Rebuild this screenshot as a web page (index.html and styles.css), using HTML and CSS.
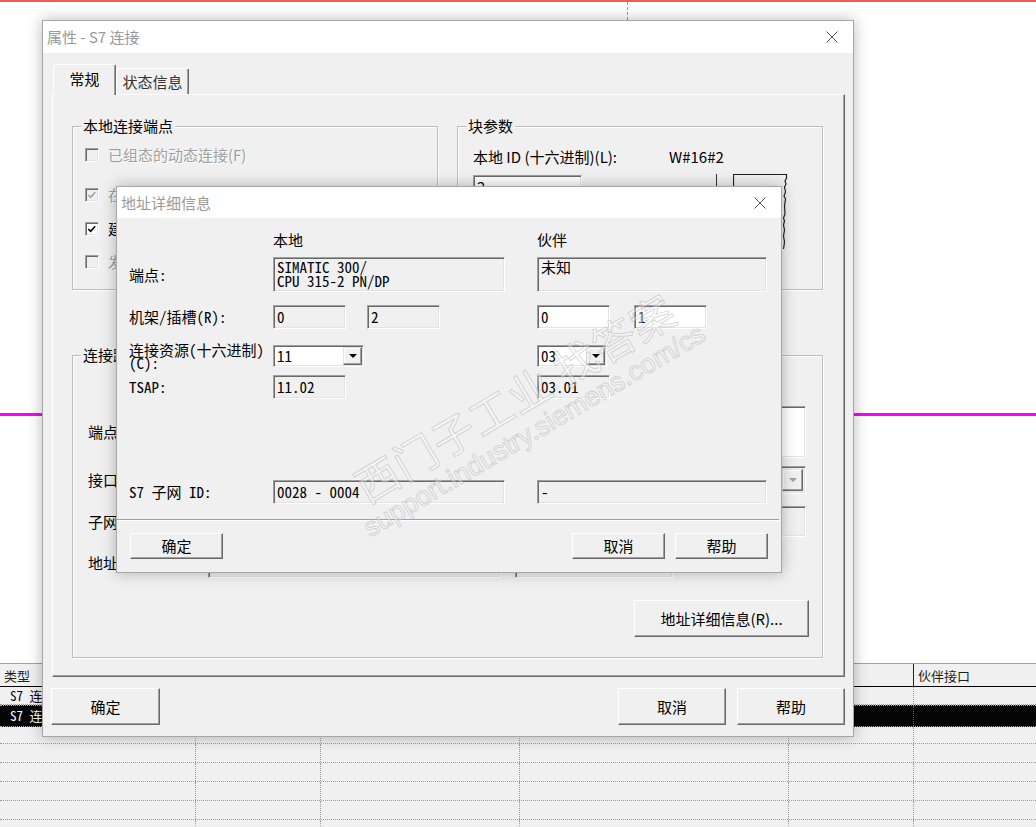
FILE: index.html
```html
<!DOCTYPE html>
<html lang="zh-CN">
<head>
<meta charset="utf-8">
<title>属性 - S7 连接</title>
<link rel="stylesheet" href="styles.css">
</head>
<body>
<div class="desktop">
  <div class="canvas">
    <div class="dash-v"></div>
    <div class="magenta"></div>
  </div>
  <div class="list">
    <div class="lrow lhead"><div>类型</div><div>活动连接建立</div><div>发送操作模式消息</div><div>本地接口</div><div>子网</div><div>伙伴接口</div></div>
    <div class="lrow r1"><div>S7 连接</div><div></div><div></div><div></div><div></div><div></div></div>
    <div class="lrow sel"><div>S7 连接</div><div></div><div></div><div></div><div></div><div></div></div>
    <div class="lrow r3"><div></div><div></div><div></div><div></div><div></div><div></div></div>
    <div class="lrow"><div></div><div></div><div></div><div></div><div></div><div></div></div>
    <div class="lrow"><div></div><div></div><div></div><div></div><div></div><div></div></div>
    <div class="lrow"><div></div><div></div><div></div><div></div><div></div><div></div></div>
    <div class="lrow"><div></div><div></div><div></div><div></div><div></div><div></div></div>
    <div class="lrow"><div></div><div></div><div></div><div></div><div></div><div></div></div>
  </div>
</div>

<div class="win outer">
  <div class="titlebar"><span class="title">属性 - S7 连接</span><svg class="x" width="12" height="12" viewBox="0 0 12 12"><path d="M0.5 0.5L11.5 11.5M11.5 0.5L0.5 11.5" stroke="#555" stroke-width="1" fill="none"/></svg></div>
  <div class="ob">
    <div class="tabs"><div class="tab active">常规</div><div class="tab">状态信息</div></div>
    <div class="panel">
      <div class="groups">
        <div class="group g-local">
          <span class="legend">本地连接端点</span>
          <div class="chk dis c1"><span class="cb"></span><span>已组态的动态连接(F)</span></div>
          <div class="chk dis c2"><span class="cb"><svg viewBox="0 0 13 13"><path d="M2.5 6.5l2.5 2.5 5-5.5" stroke="#a0a0a0" stroke-width="1.8" fill="none"/></svg></span><span>在一端(O)</span></div>
          <div class="chk c3"><span class="cb on"><svg viewBox="0 0 13 13"><path d="M2.5 6.5l2.5 2.5 5-5.5" stroke="#000" stroke-width="1.8" fill="none"/></svg></span><span>建立激活的连接(A)</span></div>
          <div class="chk dis c4"><span class="cb"></span><span>发送工作模式消息(S)</span></div>
        </div>
        <div class="group g-block">
          <span class="legend">块参数</span>
          <div class="brow"><span class="blbl">本地 ID (十六进制)(L):</span><span>W#16#2</span></div>
          <div class="brow2">
            <div class="fld w bid">2</div>
            <div class="vline"></div>
            <svg class="blk" width="56" height="75" viewBox="0 0 56 75"><path d="M0.5 75V0.5H53.5V4L52 7L53 10L51.5 13L52.5 18L51 22L52.5 25L51.5 32L52 40L50.5 44L51.5 47L50.5 51L51.5 56L50.5 62L51.5 68L50.5 75" stroke="#222" stroke-width="1.2" fill="#f0f0f0"/></svg>
          </div>
        </div>
        <div class="group g-path">
          <span class="legend">连接路径</span>
          <div class="prow phdr"><span></span><span>本地</span><span>伙伴</span></div>
          <div class="prow p-ep"><span>端点:</span><div class="fld"></div><div class="fld w"></div></div>
          <div class="prow p-if"><span>接口:</span><div class="fld dd"><span class="drop dis"><i></i></span></div><div class="fld dd"><span class="drop dis"><i></i></span></div></div>
          <div class="prow p-sub"><span>子网:</span><div class="fld"></div><div class="fld"></div></div>
          <div class="prow p-addr"><span>地址:</span><div class="fld"></div><div class="fld short"></div></div>
          <div class="pbtn"><div class="btn big">地址详细信息(R)...</div></div>
        </div>
      </div>
    </div>
    <div class="obtns"><div class="btn ok">确定</div><span class="grow"></span><div class="btn cn">取消</div><div class="btn cn">帮助</div></div>
  </div>
</div>

<div class="win inner">
  <div class="titlebar"><span class="title">地址详细信息</span><svg class="x" width="12" height="12" viewBox="0 0 12 12"><path d="M0.5 0.5L11.5 11.5M11.5 0.5L0.5 11.5" stroke="#555" stroke-width="1" fill="none"/></svg></div>
  <div class="ib">
    <div class="irow hdr"><span></span><span>本地</span><span>伙伴</span></div>
    <div class="irow r-ep"><span>端点:</span><div class="fld ml">SIMATIC 300/<br>CPU 315-2 PN/DP</div><div class="fld ml">未知</div></div>
    <div class="irow r-rack"><span>机架/插槽(R):</span><div class="pair"><div class="fld s">0</div><div class="fld s">2</div></div><div class="pair p2"><div class="fld s w">0</div><div class="fld s w">1</div></div></div>
    <div class="irow r-res"><span class="two">连接资源(十六进制)<br>(C):</span><div><div class="fld w combo cl"><span>11</span><span class="drop"><i></i></span></div></div><div><div class="fld w combo cp"><span>03</span><span class="drop"><i></i></span></div></div></div>
    <div class="irow r-tsap"><span>TSAP:</span><div><div class="fld s">11.02</div></div><div><div class="fld s">03.01</div></div></div>
    <div class="irow r-sub"><span>S7 子网 ID:</span><div class="fld">0028 - 0004</div><div class="fld">-</div></div>
    <div class="sep"></div>
    <div class="ibtns"><div class="btn">确定</div><span class="grow"></span><div class="btn">取消</div><div class="btn">帮助</div></div>
    <div class="wm"><div class="wm1">西门子工业 找答案</div><div class="wm2">support.industry.siemens.com/cs</div></div>
  </div>
</div>
</body>
</html>
```

FILE: styles.css
```css
* { box-sizing: border-box; }
html, body { margin: 0; }
body {
  width: 1036px; height: 827px; overflow: hidden; position: relative;
  background: #fff; color: #000;
  font-family: "Noto Sans CJK SC", "Liberation Sans", sans-serif;
  font-size: 15px; line-height: 20px;
}

/* background canvas */
.desktop { display: flex; flex-direction: column; height: 827px; }
.canvas { flex: none; position: relative; height: 663px; border-top: 2px solid #f45a5a; background: #fff; }
.dash-v { position: absolute; left: 627px; top: 0; height: 18px; border-left: 1px dashed #9a9a9a; }
.magenta { position: absolute; left: 0; right: 0; top: 411px; height: 3px; background: #ff00ff; }

.list { flex: 1; min-height: 0; overflow: hidden; background: #f0f0f0; font-family: "Noto Sans Mono CJK SC", "Liberation Mono", "Noto Sans CJK SC", monospace; font-size: 13px; }
.lrow { display: grid; grid-template-columns: 196px 125px 199px 269px 125px 1fr; height: 19px; border-bottom: 1px dotted #9a9a9a; }
.lrow > div { border-right: 1px dotted #9a9a9a; padding-left: 10px; line-height: 18px; white-space: nowrap; overflow: hidden; }
.lrow > div:last-child { border-right: none; }
.lhead { height: 24px; border-top: 1px solid #a0a0a0; border-bottom: 1px solid #000; font-family: "Noto Sans CJK SC", sans-serif; color: #222; }
.lhead > div { border-right: 1px solid #222; padding: 3px 0 0 4px; }
.lrow.r1 { height: 18px; }
.lrow.sel { height: 22px; background: #050505; color: #fff; border-top: 1px dotted #aaa; border-bottom: 1px dotted #aaa; }
.lrow.sel > div { border-right-color: #666; line-height: 19px; }
.lrow.r3 { height: 17px; }

/* windows */
.win { position: absolute; background: #f0f0f0; border: 1px solid #a6a6a6; box-shadow: 0 0 14px rgba(0,0,0,0.28); display: flex; flex-direction: column; }
.outer { left: 42px; top: 20px; width: 812px; }
.inner { left: 116px; top: 186px; width: 666px; }
.titlebar { display: flex; align-items: center; background: #fff; height: 32px; padding-left: 4px; }
.inner .titlebar { height: 31px; }
.title { color: #999; font-size: 15px; }
.x { margin-left: auto; margin-right: 15px; }

/* buttons */
.btn {
  display: flex; align-items: center; justify-content: center;
  background: #f0f0f0; border: 1px solid; border-color: #fff #696969 #696969 #fff;
  box-shadow: inset -1px -1px 0 #a0a0a0;
}
.grow { flex: 1; }

/* outer body */
.ob { padding: 11px 8px 11px 8px; display: flex; flex-direction: column; }
.tabs { display: flex; align-items: flex-end; height: 30px; padding-left: 2px; position: relative; z-index: 1; }
.tab {
  width: 73px; height: 26px; display: flex; align-items: center; justify-content: center;
  border: 1px solid; border-bottom: none; border-color: #fff #696969 transparent #fff;
  border-radius: 2px 2px 0 0; color: #333; background: #f0f0f0;
  box-shadow: inset -1px 0 0 #a0a0a0;
}
.tab.active { width: 63px; height: 31px; margin-bottom: -1px; color: #000; padding-bottom: 2px; }
.panel {
  margin-left: 1px; border: 1px solid; border-color: #fff #696969 #696969 #fff;
  box-shadow: inset -1px -1px 0 #a0a0a0;
  padding: 31px 21px 18px 19px;
}
.groups { display: grid; grid-template-columns: 366px 366px; column-gap: 19px; row-gap: 65px; }
.group { border: 1px solid #bdbdbd; box-shadow: inset 1px 1px 0 #fff, 1px 1px 0 #fff; display: flex; flex-direction: column; }
.g-local, .g-block { height: 164px; }
.g-path { grid-column: 1 / 3; height: 303px; padding: 0 13px 0 15px; }
.legend { display: block; width: max-content; margin: -11px 0 0 8px; padding: 0 2px; background: #f0f0f0; height: 20px; line-height: 20px; }
.g-path .legend { margin-left: -7px; }

.chk { display: flex; align-items: center; height: 20px; margin-left: 12px; gap: 9px; }
.chk.c1 { margin-top: 9px; }
.chk.c2 { margin-top: 20px; }
.chk.c3 { margin-top: 14px; }
.chk.c4 { margin-top: 13px; }
.chk.dis { color: #a0a0a0; text-shadow: 1px 1px 0 #fff; }
.cb {
  width: 14px; height: 14px; flex: none; background: #f0f0f0;
  border: 1px solid; border-color: #a0a0a0 #fff #fff #a0a0a0;
  box-shadow: inset 1px 1px 0 #696969, inset -1px -1px 0 #e3e3e3;
  display: flex;
}
.cb.on { background: #fff; }
.cb svg { width: 12px; height: 12px; }

.brow { display: flex; margin: 11px 0 0 15px; }
.blbl { width: 196px; }
.brow2 { display: flex; align-items: flex-start; margin: 8px 0 0 15px; }
.bid { width: 109px; height: 24px; padding-left: 4px; }
.vline { width: 1px; height: 60px; background: #333; margin-left: 134px; margin-top: -1px; }
.blk { margin-left: 16px; margin-top: -1px; display: block; }

/* fields */
.fld {
  background: #f0f0f0; border: 1px solid; border-color: #a0a0a0 #fff #fff #a0a0a0;
  box-shadow: inset 1px 1px 0 #696969, inset -1px -1px 0 #e3e3e3;
  display: flex; align-items: center; padding-left: 3px; white-space: nowrap;
}
.fld.w { background: #fff; }

.prow { display: grid; grid-template-columns: 120px 293px 14px 291px; align-items: center; }
.prow > :nth-child(3) { grid-column: 4; }
.phdr { margin-top: 10px; height: 20px; }
.p-ep { margin-top: 11px; height: 52px; }
.p-ep .fld { height: 52px; }
.p-if { margin-top: 8px; height: 28px; }
.p-if .fld { height: 28px; }
.p-sub { margin-top: 12px; height: 31px; }
.p-sub .fld { height: 31px; }
.p-addr { margin-top: 11px; height: 30px; }
.p-addr .fld { height: 30px; }
.p-addr .fld.short { width: 158px; }
.pbtn { display: flex; justify-content: flex-end; margin-top: 22px; }
.btn.big { width: 175px; height: 37px; }
.dd { justify-content: flex-end; padding: 2px; }

.drop {
  width: 19px; height: 18px; margin-left: auto; display: flex; align-items: center; justify-content: center;
  background: #f0f0f0; border: 1px solid; border-color: #e3e3e3 #696969 #696969 #e3e3e3;
  box-shadow: inset -1px -1px 0 #a0a0a0, inset 1px 1px 0 #fff;
}
.drop i { width: 0; height: 0; border-left: 4px solid transparent; border-right: 4px solid transparent; border-top: 4px solid #000; }
.drop.dis { height: 22px; width: 21px; }
.drop.dis i { border-top-color: #a0a0a0; }

.obtns { display: flex; margin-top: 11px; gap: 11px; height: 37px; }
.obtns .ok { width: 109px; }
.obtns .cn { width: 108px; }

/* inner dialog body */
.ib {
  position: relative; padding: 14px 13px 13px 12px;
  font-family: "Noto Sans Mono CJK SC", "Liberation Mono", "Noto Sans CJK SC", monospace; font-size: 15px;
}
.irow { display: grid; grid-template-columns: 144px 232px 32px 230px; align-items: center; }
.irow > :nth-child(3) { grid-column: 4; }
.hdr { height: 16px; line-height: 16px; }
.r-ep { margin-top: 9px; }
.r-ep .fld { height: 35px; align-items: flex-start; padding-top: 2px; line-height: 14px; }
.r-rack { margin-top: 13px; }
.pair { display: flex; gap: 21px; }
.pair.p2 { gap: 24px; }
.fld.s { width: 73px; height: 24px; line-height: 16px; }
.r-res { margin-top: 14px; height: 26px; }
.two { line-height: 13px; }
.combo { height: 22px; padding: 0 1px 0 3px; }
.combo.cl { width: 91px; }
.combo.cp { width: 70px; }
.r-tsap { margin-top: 6px; }
.r-sub { margin-top: 81px; }
.r-sub .fld { height: 24px; }
.sep { margin: 15px -11px 0 -12px; height: 2px; border-top: 1px solid #a0a0a0; border-bottom: 1px solid #fff; }
.ibtns { display: flex; margin-top: 12px; gap: 10px; height: 26px; padding-left: 1px; }
.ibtns .btn { width: 93px; }

.wm {
  position: absolute; left: 405px; top: 192px; transform: translate(-50%, -50%) rotate(-30.5deg);
  text-align: center; pointer-events: none; white-space: nowrap;
  color: rgba(255,255,255,0.4); -webkit-text-stroke: 1px rgba(170,170,170,0.45);
}
.wm1 { font-family: "Noto Sans CJK SC", sans-serif; font-size: 43px; line-height: 48px; letter-spacing: 1px; }
.wm2 { font-family: "Liberation Sans", sans-serif; font-size: 27px; line-height: 32px; }
```
